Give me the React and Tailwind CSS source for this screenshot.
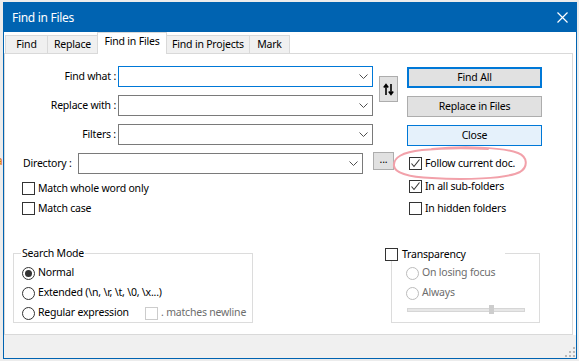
import React from "react";

function Chevron() {
  return (
    <svg width="9" height="5" viewBox="0 0 9 5" className="shrink-0">
      <path d="M0.5 0.5L4.5 4.5L8.5 0.5" fill="none" stroke="#505050" strokeWidth="1" />
    </svg>
  );
}

function Combo({ className, focus }) {
  return (
    <div
      className={`flex h-[21px] shrink-0 items-center justify-end border bg-white pr-[4px] ${
        focus ? "border-[#0078d7]" : "border-[#7a7a7a]"
      } ${className}`}
    >
      <Chevron />
    </div>
  );
}

function Check({ checked, disabled }) {
  return (
    <span
      className={`flex h-[13px] w-[13px] shrink-0 items-center justify-center border bg-white ${
        disabled ? "border-[#cccccc]" : "border-[#333333]"
      }`}
    >
      {checked && (
        <svg width="11" height="11" viewBox="0 0 11 11">
          <path d="M1.5 5.5L4 8.5L9.5 1.5" fill="none" stroke="#333333" strokeWidth="1.1" />
        </svg>
      )}
    </span>
  );
}

function Radio({ on, disabled }) {
  return (
    <span
      className={`flex h-[13px] w-[13px] shrink-0 items-center justify-center rounded-full border bg-white ${
        disabled ? "border-[#bcbcbc]" : "border-[#333333]"
      }`}
    >
      {on && <span className="h-[7px] w-[7px] rounded-full bg-[#333333]" />}
    </span>
  );
}

function Button({ children, kind }) {
  const look =
    kind === "default"
      ? "border-2 border-[#0078d7] bg-[#e1e1e1]"
      : kind === "hover"
      ? "border border-[#0078d7] bg-[#e5f1fb]"
      : "border border-[#adadad] bg-[#e1e1e1]";
  return (
    <div className={`flex h-[21px] w-[135px] items-center justify-center leading-none ${look}`}>
      {children}
    </div>
  );
}

const tabs = [
  { name: "Find", w: "w-[43px]" },
  { name: "Replace", w: "w-[51px]" },
  { name: "Find in Files", w: "w-[70px]", active: true },
  { name: "Find in Projects", w: "w-[84px]" },
  { name: "Mark", w: "w-[41px]" },
];

export default function App() {
  return (
    <div className="relative h-[361px] w-[579px] overflow-hidden whitespace-nowrap bg-[#ececec] pl-[3px] pt-[2px] font-['Noto_Sans',sans-serif] text-[10.5px] tracking-[-0.2px] text-black">
      <span className="absolute left-[-4px] top-[152px] text-[12px] text-[#e07000]">a</span>

      <div className="flex h-[357px] w-[574px] flex-col border border-[#0063b1] bg-[#f0f0f0]">
        {/* title bar */}
        <div className="flex h-[29px] shrink-0 items-center justify-between bg-[#0063b1] pl-[8px] pr-[8px] text-[12px] tracking-[-0.3px] text-white">
          <span>Find in Files</span>
          <svg width="11" height="11" viewBox="0 0 11 11">
            <path d="M0.5 0.5L10.5 10.5M10.5 0.5L0.5 10.5" stroke="#ffffff" strokeWidth="1.2" />
          </svg>
        </div>

        <div className="flex h-[303px] shrink-0 flex-col bg-white">
          {/* tabs */}
          <div className="flex h-[21px] shrink-0 items-end pl-[1px]">
            {tabs.map((t) =>
              t.active ? (
                <div
                  key={t.name}
                  className={`relative z-10 -mb-[1px] -ml-[1px] flex h-[22px] items-center justify-center border-x border-t border-[#d9d9d9] bg-white pb-[3px] ${t.w}`}
                >
                  {t.name}
                </div>
              ) : (
                <div
                  key={t.name}
                  className={`-ml-[1px] flex h-[18px] items-center justify-center border-x border-t border-[#d9d9d9] bg-[#f0f0f0] first:ml-0 ${t.w}`}
                >
                  {t.name}
                </div>
              )
            )}
          </div>

          {/* panel */}
          <div className="relative flex h-[282px] w-[569px] flex-col border border-[#d9d9d9] bg-white">
            <div className="flex h-[199px] shrink-0 pt-[12px]">
              {/* left column */}
              <div className="flex w-[402px] shrink-0 flex-col">
                <div className="flex">
                  <div className="flex w-[368px] flex-col gap-[8px]">
                    {[
                      ["Find what :", true],
                      ["Replace with :", false],
                      ["Filters :", false],
                    ].map(([label, focus]) => (
                      <div key={label} className="flex h-[21px] items-center">
                        <span className="w-[111px] text-right">{label}</span>
                        <Combo className="ml-[2px] w-[255px]" focus={focus} />
                      </div>
                    ))}
                  </div>
                  <div className="ml-[6px] mt-[10px] flex h-[26px] w-[19px] items-center justify-center border border-[#adadad] bg-[#e1e1e1]">
                    <svg width="11" height="13" viewBox="0 0 11 13">
                      <path d="M3 12V2M0.8 4.5L3 1.5L5.2 4.5" fill="none" stroke="#000" strokeWidth="1.6" />
                      <path d="M8 1V11M5.8 8.5L8 11.5L10.2 8.5" fill="none" stroke="#000" strokeWidth="1.6" />
                    </svg>
                  </div>
                </div>

                <div className="mt-[8px] flex h-[21px] items-start">
                  <span className="ml-[18px] flex h-[21px] w-[55px] items-center">Directory :</span>
                  <Combo className="w-[285px]" />
                  <div className="-mt-[1px] ml-[10px] flex h-[18px] w-[21px] items-center justify-center border border-[#adadad] bg-[#e1e1e1] pb-[3px] leading-none">
                    ...
                  </div>
                </div>

                <div className="ml-[17px] mt-[8px] flex h-[13px] items-center gap-[3px] leading-none">
                  <Check />
                  <span>Match whole word only</span>
                </div>
                <div className="ml-[17px] mt-[7px] flex h-[13px] items-center gap-[3px] leading-none">
                  <Check />
                  <span>Match case</span>
                </div>
              </div>

              {/* right column */}
              <div className="mt-[1px] flex w-[135px] flex-col">
                <div className="flex flex-col gap-[8px]">
                  <Button kind="default">Find All</Button>
                  <Button>Replace in Files</Button>
                  <Button kind="hover">Close</Button>
                </div>
                <div className="relative ml-[2px] mt-[11px] flex h-[13px] items-center gap-[3px] leading-none">
                  <Check checked />
                  <span>Follow current doc.</span>
                  <svg
                    width="138"
                    height="36"
                    viewBox="0 0 138 36"
                    className="pointer-events-none absolute left-[-17px] top-[-12px]"
                  >
                    <path
                      d="M40 4C70 1 110 2 126 8C136 12 136 22 128 27C114 34 70 35 40 33C16 32 3 28 2 21C1 13 10 7 30 5C50 3 80 3 96 4"
                      fill="none"
                      stroke="#f2a1aa"
                      strokeWidth="2"
                      strokeLinecap="round"
                    />
                  </svg>
                </div>
                <div className="ml-[2px] mt-[10px] flex h-[13px] items-center gap-[3px] leading-none">
                  <Check checked />
                  <span>In all sub-folders</span>
                </div>
                <div className="ml-[2px] mt-[9px] flex h-[13px] items-center gap-[3px] leading-none">
                  <Check />
                  <span>In hidden folders</span>
                </div>
              </div>
            </div>

            {/* bottom groups */}
            <div className="flex pl-[8px]">
              <div className="relative h-[70px] w-[240px] border border-[#dcdcdc] pl-[8px] pt-[9px]">
                <span className="absolute left-[7px] top-[-8px] bg-white px-[1px] leading-[14px]">Search Mode</span>
                <div className="flex h-[20px] items-center gap-[3px]">
                  <Radio on />
                  <span>Normal</span>
                </div>
                <div className="flex h-[20px] items-center gap-[3px]">
                  <Radio />
                  <span>Extended (\n, \r, \t, \0, \x...)</span>
                </div>
                <div className="flex h-[20px] items-center">
                  <span className="flex w-[123px] shrink-0 items-center gap-[3px]">
                    <Radio />
                    <span>Regular expression</span>
                  </span>
                  <span className="flex items-center gap-[3px] text-[#6d6d6d]">
                    <Check disabled />
                    <span>. matches newline</span>
                  </span>
                </div>
              </div>

              <div className="relative ml-[138px] h-[70px] w-[149px] border border-[#dcdcdc] pl-[14px] pt-[9px]">
                <span className="absolute left-[-7px] top-[-6px] flex h-[13px] w-[120px] items-center gap-[4px] bg-white leading-none">
                  <Check />
                  <span>Transparency</span>
                </span>
                <div className="flex h-[20px] items-center gap-[3px] text-[#6d6d6d]">
                  <Radio disabled />
                  <span>On losing focus</span>
                </div>
                <div className="flex h-[20px] items-center gap-[3px] text-[#6d6d6d]">
                  <Radio disabled />
                  <span>Always</span>
                </div>
                <div className="relative ml-[1px] mt-[5px] h-[4px] w-[118px] border border-[#d6d6d6] bg-[#e7e7e7]">
                  <span className="absolute left-[81px] top-[-4px] h-[9px] w-[5px] bg-[#cdcdcd]" />
                </div>
              </div>
            </div>
          </div>
        </div>

        {/* footer with size grip */}
        <div className="flex flex-1 items-end justify-end pb-[1px] pr-[1px]">
          <svg width="10" height="10" viewBox="0 0 10 10">
            <g fill="#b8b8b8">
              <rect x="8" y="0" width="2" height="2" />
              <rect x="4" y="4" width="2" height="2" />
              <rect x="8" y="4" width="2" height="2" />
              <rect x="0" y="8" width="2" height="2" />
              <rect x="4" y="8" width="2" height="2" />
              <rect x="8" y="8" width="2" height="2" />
            </g>
          </svg>
        </div>
      </div>
    </div>
  );
}
